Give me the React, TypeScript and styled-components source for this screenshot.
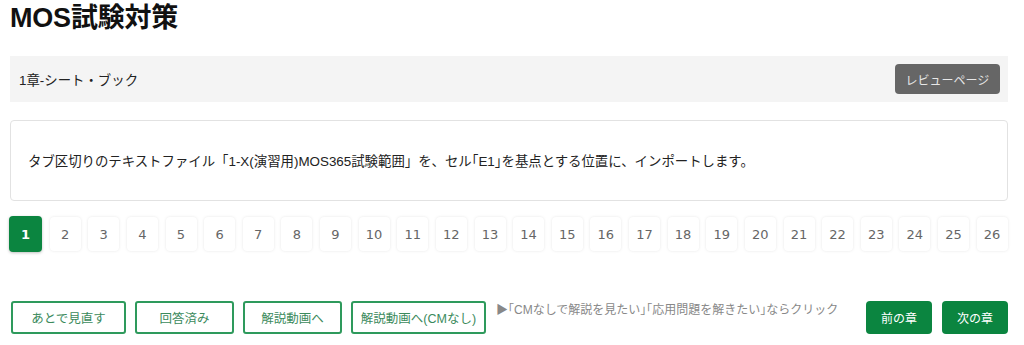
import React from "react";
import styled, { createGlobalStyle } from "styled-components";

const GlobalStyle = createGlobalStyle`
  body {
    margin: 0;
    background: #ffffff;
    font-family: "Liberation Sans", "Noto Sans CJK JP", sans-serif;
    color: #222;
  }
`;

const pages = Array.from({ length: 26 }, (_, i) => i + 1);

const App = function () {
  return (
    <>
      <GlobalStyle />
      <StyledPage>
        <StyledTitle>MOS試験対策</StyledTitle>
        <StyledChapterBar>
          <StyledChapterName>1章-シート・ブック</StyledChapterName>
          <StyledReviewBtn>レビューページ</StyledReviewBtn>
        </StyledChapterBar>
        <StyledQuestionBox>
          タブ区切りのテキストファイル「1-X(演習用)MOS365試験範囲」を、セル｢E1｣を基点とする位置に、インポートします。
        </StyledQuestionBox>
        <StyledPager>
          {pages.map((p) => (
            <StyledPageBtn key={p} $active={p === 1}>
              {p}
            </StyledPageBtn>
          ))}
        </StyledPager>
        <StyledActions>
          <StyledOutlineBtn $width={115}>あとで見直す</StyledOutlineBtn>
          <StyledOutlineBtn $width={99}>回答済み</StyledOutlineBtn>
          <StyledOutlineBtn $width={99}>解説動画へ</StyledOutlineBtn>
          <StyledOutlineBtn $width={135}>解説動画へ(CMなし)</StyledOutlineBtn>
          <StyledNote>▶｢CMなしで解説を見たい｣｢応用問題を解きたい｣ならクリック</StyledNote>
          <StyledChapterNav>
            <StyledGreenBtn>前の章</StyledGreenBtn>
            <StyledGreenBtn>次の章</StyledGreenBtn>
          </StyledChapterNav>
        </StyledActions>
      </StyledPage>
    </>
  );
};

export default App;

const StyledPage = styled.div`
  padding: 0 16px 0 10px;
  display: flex;
  flex-direction: column;
`;

const StyledTitle = styled.h1`
  margin: 3px 0 0;
  font-size: 27px;
  line-height: 30px;
  font-weight: bold;
  color: #111;
  letter-spacing: -0.2px;
`;

const StyledChapterBar = styled.div`
  margin-top: 23px;
  height: 46px;
  background: #f4f4f4;
  display: flex;
  align-items: center;
  justify-content: space-between;
  padding: 0 8px 0 9px;
`;

const StyledChapterName = styled.span`
  font-size: 13.4px;
  color: #222;
`;

const StyledReviewBtn = styled.button`
  width: 105px;
  height: 30px;
  border: none;
  border-radius: 4px;
  background: #666666;
  color: #e8e8e8;
  font-family: "Liberation Sans", "Noto Sans CJK JP", sans-serif;
  font-size: 12px;
  padding: 0;
`;

const StyledQuestionBox = styled.div`
  margin-top: 18px;
  height: 81px;
  box-sizing: border-box;
  border: 1px solid #e2e2e2;
  border-radius: 4px;
  display: flex;
  align-items: center;
  padding: 0 0 2px 17px;
  font-size: 13.4px;
  color: #222;
`;

const StyledPager = styled.div`
  margin: 15px 0 0 -1px;
  display: flex;
  justify-content: space-between;
  align-items: center;
`;

const StyledPageBtn = styled.div<{ $active: boolean }>`
  width: ${(p) => (p.$active ? "33px" : "31px")};
  height: ${(p) => (p.$active ? "36px" : "34px")};
  box-sizing: border-box;
  border-radius: 4px;
  display: flex;
  align-items: center;
  justify-content: center;
  font-family: "DejaVu Sans", sans-serif;
  font-size: 13px;
  font-weight: ${(p) => (p.$active ? "bold" : "normal")};
  color: ${(p) => (p.$active ? "#ffffff" : "#666666")};
  background: ${(p) => (p.$active ? "#0b8540" : "#ffffff")};
  box-shadow: ${(p) =>
    p.$active ? "0 1px 3px rgba(0,0,0,0.25)" : "0 0 3px rgba(0,0,0,0.1)"};
`;

const StyledActions = styled.div`
  margin-top: 49px;
  display: flex;
  align-items: flex-start;
  gap: 9px;
  padding-left: 1px;
`;

const StyledOutlineBtn = styled.button<{ $width: number }>`
  width: ${(p) => p.$width}px;
  height: 33px;
  box-sizing: border-box;
  border: 2px solid #2e9a5c;
  border-radius: 3px;
  background: #ffffff;
  color: #3b8a5c;
  font-family: "Liberation Sans", "Noto Sans CJK JP", sans-serif;
  font-size: 12.5px;
  padding: 0;
`;

const StyledNote = styled.span`
  margin: 1px 0 0 1px;
  font-size: 12px;
  line-height: 16px;
  color: #888888;
  white-space: nowrap;
`;

const StyledChapterNav = styled.div`
  margin-left: auto;
  display: flex;
  gap: 10px;
`;

const StyledGreenBtn = styled.button`
  width: 66px;
  height: 33px;
  border: none;
  border-radius: 4px;
  background: #0b8540;
  color: #ffffff;
  font-family: "Liberation Sans", "Noto Sans CJK JP", sans-serif;
  font-size: 12px;
  padding: 0;
`;
